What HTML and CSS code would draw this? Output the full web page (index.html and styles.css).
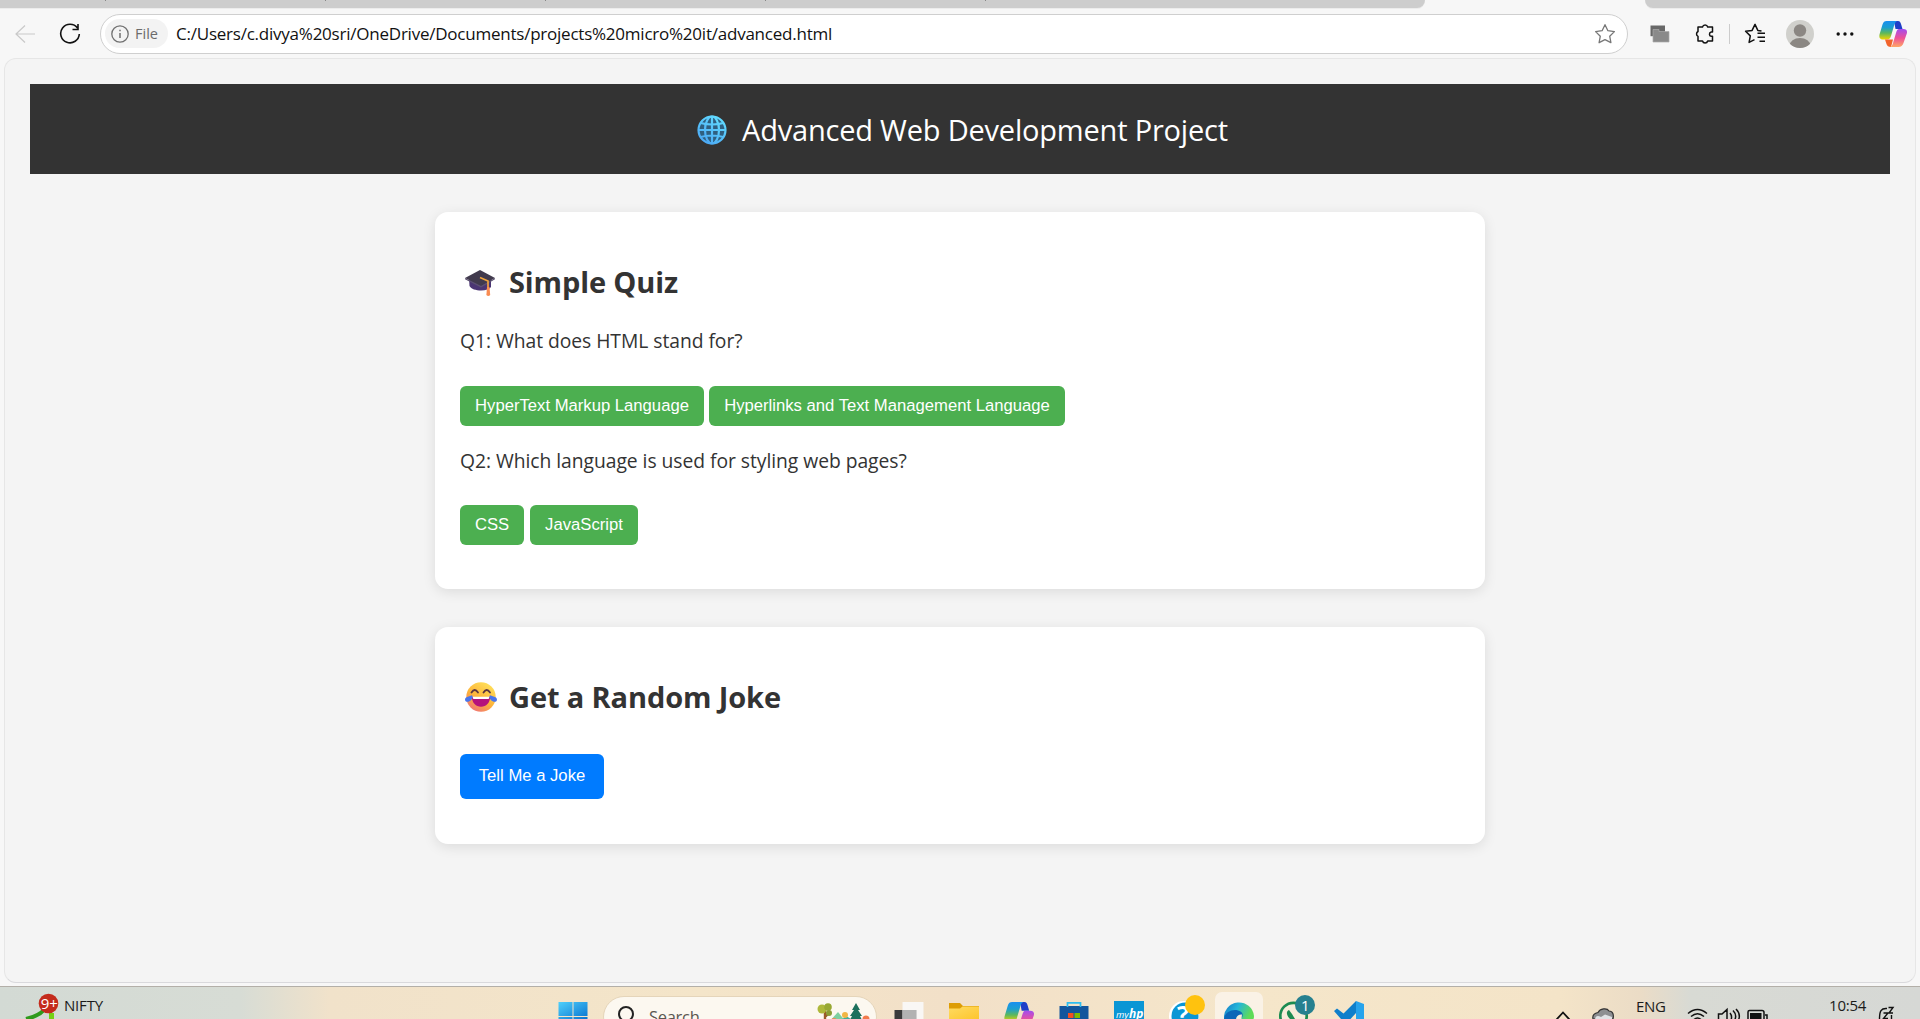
FILE: index.html
```html
<!DOCTYPE html>
<html lang="en">
<head>
<meta charset="utf-8">
<title>Advanced Web Development Project</title>
<link rel="stylesheet" href="styles.css">
</head>
<body>
<svg class="defs" width="0" height="0" aria-hidden="true">
  <defs>
    <linearGradient id="coA" x1="0" y1="0" x2="0" y2="1"><stop offset="0" stop-color="#1a8ff0"/><stop offset=".35" stop-color="#1c9fd0"/><stop offset=".65" stop-color="#5cb85c"/><stop offset="1" stop-color="#f4d400"/></linearGradient>
    <linearGradient id="coB" x1="0" y1="0" x2="0" y2="1"><stop offset="0" stop-color="#a24df0"/><stop offset=".5" stop-color="#ee5197"/><stop offset="1" stop-color="#ffa765"/></linearGradient>
    <linearGradient id="win" x1="0" y1="0" x2="1" y2="1"><stop offset="0" stop-color="#4fd0fb"/><stop offset="1" stop-color="#0873d0"/></linearGradient>
    <linearGradient id="edge" x1="0" y1="0" x2="1" y2=".3"><stop offset="0" stop-color="#1477c8"/><stop offset=".5" stop-color="#24b6d8"/><stop offset="1" stop-color="#5fdb57"/></linearGradient>
    <linearGradient id="fold" x1="0" y1="0" x2="1" y2="1"><stop offset="0" stop-color="#ffdb62"/><stop offset="1" stop-color="#fdc52d"/></linearGradient>
    <linearGradient id="face" x1=".8" y1="0" x2=".2" y2="1"><stop offset="0" stop-color="#ffe35c"/><stop offset=".55" stop-color="#fdb43a"/><stop offset="1" stop-color="#f0707a"/></linearGradient>
    <linearGradient id="globe" x1=".8" y1="0" x2=".2" y2="1"><stop offset="0" stop-color="#62dcff"/><stop offset="1" stop-color="#4ba8f5"/></linearGradient>
    <symbol id="copilot" viewBox="0 0 28 26">
      <path d="M15 0h4c2 0 2.500 1.500 3 3l1.500 5h-7z" fill="#1f3fc8"/>
      <path d="M7.500 0H18c-2 1-2.500 3-3.200 5.500L12 15c-.8 2.700-2 3.500-4 3.500H4C.5 18.500 0 16 .5 13.500L3.500 3.500C4.300 1 5.500 0 7.500 0z" fill="url(#coA)"/>
      <path d="M6 18.500h8L12 26c-2.500 0-4-1-4.500-3z" fill="#f2642c"/>
      <path d="M20 8h4.500c3 0 4 2 3.300 4.500L24.500 22c-.9 2.700-2.500 4-5 4h-9c2 0 2.800-1.600 3.400-3.500L17 12c.8-2.700 1.500-4 3-4z" fill="url(#coB)"/>
    </symbol>
  </defs>
</svg>

<div class="browser">
  <div class="tabs"><div class="tabs-left"><i></i><i></i><i></i><i></i><i></i></div><div class="tabs-right"></div></div>
  <div class="toolbar">
    <svg class="back" width="20" height="20" viewBox="0 0 20 20"><path d="M10 1.500 1 10l9 8.500M1 10h19" fill="none" stroke="#c9c9c9" stroke-width="1.200"/></svg>
    <svg class="reload" width="22" height="22" viewBox="0 0 22 22"><path d="M18.500 5A9.300 9.300 0 1 0 20.300 11M19 1v5.500h-5.500" fill="none" stroke="#111" stroke-width="1.600"/></svg>
    <div class="address">
      <div class="chip">
        <svg width="18" height="18" viewBox="0 0 18 18"><circle cx="9" cy="9" r="8.200" fill="none" stroke="#707070" stroke-width="1.300"/><path d="M9 8v5M9 4.700v1.600" stroke="#707070" stroke-width="1.500"/></svg>
        <span class="chip-text">File</span>
      </div>
      <span class="url">C:/Users/c.divya%20sri/OneDrive/Documents/projects%20micro%20it/advanced.html</span>
      <svg class="star" width="22" height="22" viewBox="0 0 22 22"><path d="m11 1.700 2.900 6 6.500.9-4.700 4.600 1.200 6.500L11 16.600l-5.900 3.100 1.200-6.500L1.600 8.600l6.500-.9z" fill="none" stroke="#777" stroke-width="1.300" stroke-linejoin="round"/></svg>
    </div>
    <svg class="squares" width="20" height="18" viewBox="0 0 20 18"><path d="M.5.500H15v10.700H.5z" fill="#686868"/><path d="M3 4.500h6v2h10v10.500H3z" fill="#8a8a8a" stroke="#aaa" stroke-width=".7"/></svg>
    <svg class="puzzle" width="22" height="22" viewBox="0 0 22 22"><path d="M4 4.500h4.500a2.700 2.700 0 0 1 5.200 0H18.500v5h-1.300a2.200 2.200 0 0 0 0 4.300h1.300v4.700h-4.800a2.700 2.700 0 0 1-5.200 0H4v-4.700a2.700 2.700 0 0 1 0-4.800z" transform="translate(0 -.5)" fill="none" stroke="#111" stroke-width="1.500" stroke-linejoin="round"/></svg>
    <span class="sep"></span>
    <svg class="favs" width="22" height="22" viewBox="0 0 22 22"><path d="M17.500 8.300 13.800 7.700 11 1.700 8.100 7.700l-6.500.9 4.700 4.600-1.200 6.500L10.500 17M13.500 10.500H21M13.500 14.500H21M15.500 18.500H21" transform="translate(0 -.3)" fill="none" stroke="#111" stroke-width="1.500" stroke-linejoin="round"/></svg>
    <svg class="avatar" width="28" height="28" viewBox="0 0 28 28"><clipPath id="av"><circle cx="14" cy="14" r="14"/></clipPath><g clip-path="url(#av)"><path d="M0 0h28v28H0z" fill="#d0d0cc"/><circle cx="14" cy="10.500" r="6.200" fill="#8b8783"/><ellipse cx="14" cy="26" rx="10.500" ry="8" fill="#8b8783"/></g></svg>
    <svg class="dots" width="18" height="6" viewBox="0 0 18 6"><g fill="#111"><circle cx="2.200" cy="3" r="1.700"/><circle cx="9" cy="3" r="1.700"/><circle cx="15.800" cy="3" r="1.700"/></g></svg>
    <svg class="copilot" width="28" height="26"><use href="#copilot"/></svg>
  </div>

  <div class="page">
    <header class="banner">
      <svg width="30" height="30" viewBox="0 0 30 30"><circle cx="15" cy="15" r="14" fill="#2f5f80"/><g fill="none" stroke="url(#globe)" stroke-width="2.200"><circle cx="15" cy="15" r="13.500"/><ellipse cx="15" cy="15" rx="7" ry="13.500"/><path d="M15.010 1v28M1 15.010h28M3.500 8q11.500 3 23 0M3.500 22q11.500-3 23 0"/></g></svg>
      <h1>Advanced Web Development Project</h1>
    </header>

    <section class="card quiz">
      <h2><svg width="30" height="28" viewBox="0 0 30 28"><path d="M4 9h22v9c-1.500 2-5 3.500-10 3.500S6 20 4.500 17z" fill="#4b3573"/><path d="M15 1 30 9 16 17 0 9z" fill="#413a4d"/><path d="M0 9 16 17 30 9v1.200L16 18.600 0 10.200z" fill="#5c5270"/><path d="M15 8.500 23 12v8" fill="none" stroke="#f0a33e" stroke-width="1.700"/><path d="M22 18h2.500l.7 8q-1.900 2-3.800 0z" fill="#f98c52"/></svg><span>Simple Quiz</span></h2>
      <p>Q1: What does HTML stand for?</p>
      <div class="answers"><button class="b1">HyperText Markup Language</button><button class="b2">Hyperlinks and Text Management Language</button></div>
      <p class="next">Q2: Which language is used for styling web pages?</p>
      <div class="answers"><button class="b3">CSS</button><button class="b4">JavaScript</button></div>
    </section>

    <section class="card joke">
      <h2><svg width="32" height="30" viewBox="0 0 32 30"><circle cx="16" cy="15" r="14.700" fill="url(#face)"/><path d="M6.500 10.500q3.200-5 6.500 0M18.500 10.500q3.200-5 6.500 0" fill="none" stroke="#5b3540" stroke-width="1.800" stroke-linecap="round"/><path d="M7 15h18c0 6-3.800 9.700-9 9.700S7 21 7 15z" fill="#b5127c"/><path d="M7.500 14.800h17l-.8 2.200H8.300z" fill="#fff"/><path d="M7 13.200c2 2-1.500 6.600-4.500 6.600S-.7 16.500 1.500 15.300zM25 13.200c-2 2 1.500 6.600 4.500 6.600s3.200-3.300 1-4.500z" fill="#4a75ec"/></svg><span>Get a Random Joke</span></h2>
      <button class="b5">Tell Me a Joke</button>
    </section>
  </div>
</div>

<footer class="taskbar">
  <div class="widget">
    <svg width="40" height="33" viewBox="0 0 40 33"><path d="M6 33 Q19 30 25 23" fill="none" stroke="#2f9a1c" stroke-width="4"/><path d="M29 27h5v6h-5z" fill="#74d014"/><circle cx="28.500" cy="17.500" r="9.800" fill="#c42b1c"/><text x="20.800" y="23" class="nine">9+</text></svg>
    <span class="nifty">NIFTY</span>
  </div>
  <div class="apps">
    <div class="slot"><svg width="30" height="18" viewBox="0 0 30 18"><path d="M.5 1h14v14H.5zM15.500 1h14v14h-14zM.5 16h14v2H.5zM15.500 16h14v2h-14z" fill="url(#win)"/></svg></div>
    <div class="search">
      <svg width="20" height="23" viewBox="0 0 20 23"><circle cx="11" cy="17" r="7" fill="none" stroke="#222" stroke-width="2"/></svg>
      <span class="search-text">Search</span>
      <svg class="scene" width="54" height="20" viewBox="0 0 54 20"><path d="M8 8v12M13 10l-5 5" stroke="#9a5a28" stroke-width="2.400"/><circle cx="5" cy="7" r="4.500" fill="#aeb83a"/><circle cx="11" cy="5" r="3.800" fill="#98a832"/><circle cx="12" cy="11" r="3" fill="#8a9c34"/><path d="m12 20 9-10 8 10z" fill="#7dcfa0"/><path d="m22 20 7-6 10 6z" fill="#3fae9b"/><circle cx="28" cy="13" r="3" fill="#f1b544"/><path d="m39 1 4 7h-2l4 6h-2l3 6H32l3-6h-2l4-6h-2z" fill="#1c705c"/><circle cx="49" cy="17" r="3.500" fill="#f27a4b"/><circle cx="17" cy="19" r="3" fill="#ee8a54"/></svg>
    </div>
    <div class="slot"><svg width="30" height="18" viewBox="0 0 30 18"><path d="M.5 9h22v9H.5z" fill="#3a3a3a"/><path d="M8.500 1h21v17h-21z" fill="#fafafa" opacity=".9"/><path d="M8.500 9h14v9h-14z" fill="#b2b2b2"/></svg></div>
    <div class="slot"><svg width="30" height="18" viewBox="0 0 30 18"><path d="M0 2h11l3 3h16v4H0z" fill="#dd9d06"/><path d="M0 7.500h11l2.500-2H30V18H0z" fill="url(#fold)"/></svg></div>
    <div class="slot"><svg width="30" height="18" viewBox="0 0 30 18"><use href="#copilot" y="1" width="30" height="28"/></svg></div>
    <div class="slot"><svg width="30" height="18" viewBox="0 0 30 18"><path d="M.5 5h29v13H.5z" fill="#13559c"/><path d="M8.500 6V1.800h13V6" fill="none" stroke="#2dbdf0" stroke-width="1.700"/><path d="M9 12h5.500v5H9z" fill="#f25022"/><path d="M15.500 12H21v5h-5.500z" fill="#7fba00"/></svg></div>
    <div class="slot"><svg width="30" height="18" viewBox="0 0 30 18"><path d="M0 0h30v18H0z" fill="#0a96d5"/><text x="2" y="16.500" class="my">my</text><text x="15" y="16.500" class="hp">hp</text></svg></div>
    <div class="slot"><svg width="36" height="25" viewBox="0 0 36 25" class="help"><circle cx="15" cy="22" r="15" fill="#fff"/><circle cx="16" cy="22" r="13.500" fill="#0a96d5"/><text x="8" y="30" class="q">?</text><circle cx="26" cy="11" r="10" fill="#ffc20e"/></svg></div>
    <div class="slot"><div class="active"><svg width="30" height="18" viewBox="0 0 30 18"><path d="M0 18A15 15 0 0 1 30 15q0 2-.5 3z" fill="url(#edge)"/><path d="M0 18C1 11 8 8 14 9.500c5 1 6 5 3 8.500z" fill="#0c67b8"/><path d="M12 18q1-5 6-4.500l-.5 4.500z" fill="#f6ecd9"/></svg></div></div>
    <div class="slot"><svg width="36" height="25" viewBox="0 0 36 25" class="help"><circle cx="14.500" cy="22" r="13.200" fill="#f6ecd9" stroke="#1c8b51" stroke-width="2.700"/><path d="M10 16c-3 1-3 5 1 9h5l-3-5z" fill="#1c8b51"/><circle cx="26" cy="11" r="10" fill="#26808f"/><text x="22" y="16.500" class="one">1</text></svg></div>
    <div class="slot"><svg width="30" height="18" viewBox="0 0 30 18"><path d="m0 10 3-2.500 6.500 5L22 0v18H7z" fill="#0f7fcb"/><path d="m16.500 18 5.500-6v6z" fill="#f5e6ca"/><path d="m22 0 8 3v15h-8z" fill="#26a3ec"/></svg></div>
  </div>
  <div class="tray">
    <svg width="60" height="33" viewBox="0 0 60 33"><path d="m1.500 33.500 6.500-7 6.500 7" fill="none" stroke="#111" stroke-width="1.800"/><path d="M38 33c-1-4 2-6 5-6.500 2-4 9-5 11-1.500 4 0 5 4 4 8z" fill="#8d8f92" stroke="#333" stroke-width="1.200"/><path d="M40 33q1-5 6-2l4-2.500 7 2.500v2z" fill="#e0e2e6"/></svg>
    <span class="eng">ENG</span>
    <svg class="status" width="82" height="33" viewBox="0 0 82 33"><g fill="none" stroke="#111" stroke-width="1.500"><path d="M1 27.500q9.500-8 19 0M4 30.500q6.500-5.500 13 0M7 33.500q3.500-3 7 0"/><path d="M31.500 34v-6h3.500l5-4.500v11M43 27q2.500 3 1 7M46 24.500q4 4 2 9M49 23q5 5 2.500 11"/><path d="M61 34V26q0-1.500 1.500-1.500H75q2 0 2 2V34M78 29h2v4"/></g><path d="M63 27h11.500v7H63z" fill="#111"/></svg>
    <span class="time">10:54</span>
    <svg width="18" height="33" viewBox="0 0 18 33"><path d="M10 22.500C4 22 2.500 25 2.500 33" fill="none" stroke="#111" stroke-width="1.400"/><path d="M6.500 27H11l-4.500 5.500H11M11.500 21.500H16L12 27h4M14.500 29v5" fill="none" stroke="#111" stroke-width="1.400"/></svg>
  </div>
</footer>
</body>
</html>
```
FILE: styles.css
```css
* { box-sizing: border-box; }
body { margin: 0; width: 1920px; height: 1019px; overflow: hidden; display: flex; flex-direction: column; background: #f7f7f7; font-family: "Open Sans", "Noto Sans", sans-serif; color: #333; }
.defs { position: absolute; }
svg { display: block; flex: none; }
span, h1, p { white-space: nowrap; }
.browser { height: 986px; display: flex; flex-direction: column; }

.tabs { height: 9px; flex: none; display: flex; justify-content: space-between; }
.tabs-left, .tabs-right { height: 8px; background: #cdcdcd; box-shadow: 0 1px #ececec; }
.tabs-left { width: 1425px; border-radius: 0 0 10px 0; display: flex; justify-content: flex-start; gap: 219px; padding-left: 105px; }
.tabs-left i { width: 1px; height: 1px; background: #888; }
.tabs-right { width: 275px; border-radius: 0 0 0 10px; }

.toolbar { height: 49px; flex: none; display: flex; align-items: center; padding-left: 15px; }
.reload { margin-left: 24px; }
.address { width: 1528px; height: 40px; margin-left: 19px; border: 1px solid #cfcfcf; border-radius: 20px; background: #fff; display: flex; align-items: center; padding-left: 4px; flex: none; }
.chip { width: 63px; height: 29px; border-radius: 15px; background: #f3f3f3; display: flex; align-items: center; gap: 6px; padding-left: 6px; flex: none; }
.chip-text { font-size: 14.500px; font-weight: 500; color: #6b6b6b; }
.url { margin-left: 8px; font-size: 17px; letter-spacing: -.230px; color: #111; }
.star { margin-left: auto; margin-right: 11px; }
.squares { margin-left: 22px; }
.puzzle { margin-left: 24px; }
.sep { width: 1px; height: 20px; background: #ccc; margin-left: 13px; }
.favs { margin-left: 14px; }
.avatar { margin-left: 20px; }
.dots { margin-left: 22px; }
.copilot { margin-left: 25px; }

.page { width: 1912px; height: 925px; margin-left: 4px; border: 1px solid #e6e6e6; border-bottom: 1px solid #d9d9dc; border-radius: 12px; background: #f4f4f4; padding: 25px 25px 0; display: flex; flex-direction: column; align-items: center; }
.banner { width: 1860px; height: 90px; flex: none; background: #333; display: flex; justify-content: flex-start; align-items: center; padding: 2px 0 0 667px; gap: 15px; }
h1 { margin: 0; font-size: 29px; font-weight: 400; letter-spacing: -.200px; color: #fff; line-height: 40px; }
.card { width: 1050px; background: #fff; border-radius: 13px; box-shadow: 0 3px 13px rgba(0,0,0,.1); padding: 0 25px; flex: none; }
.quiz { height: 377px; margin-top: 38px; padding-top: 50px; }
.joke { height: 217px; margin-top: 38px; padding-top: 50px; }
h2 { margin: 0; height: 40px; font-size: 29px; line-height: 40px; letter-spacing: -.120px; display: flex; align-items: center; padding-left: 5px; }
h2 span { margin-left: 14px; }
.quiz h2 svg { margin-top: 2px; }
.joke h2 span { margin-left: 12px; }
p { margin: 25px 0 32px; font-size: 19.300px; line-height: 27px; letter-spacing: -.040px; }
.next { margin: 21px 0 31px; }
.answers { display: flex; gap: 5px; height: 40px; }
button { height: 40px; border: 0; border-radius: 6px; background: #4caf50; color: #fff; font: 16.670px "Liberation Sans", Arial, sans-serif; padding: 0; text-align: center; white-space: nowrap; }
.b1 { width: 244px; } .b2 { width: 356px; } .b3 { width: 64px; } .b4 { width: 108px; margin-left: 1px; }
.b5 { width: 144px; height: 45px; background: #007bff; margin-top: 37px; padding-bottom: 2px; }

.taskbar { height: 33px; overflow: hidden; border-top: 1px solid #b3afa8; background: linear-gradient(90deg, #d3dad4 0, #d7dcd5 240px, #f1e2ca 330px, #f4e5c9 700px, #f2e0c8 950px, #f5e6ca 1250px, #f4e4c8 1560px, #ebdcc6 1640px, #d8dad4 1690px, #d6d8d5 1920px); display: flex; color: #1b1b1b; }
.widget { width: 545px; flex: none; display: flex; padding-left: 20px; }
.widget svg { margin-top: -1px; }
.nifty { margin: -2px 0 0 4px; font-size: 15px; letter-spacing: -.200px; line-height: 40px; }
.nine, .one { font-size: 15px; fill: #fff; }
.apps { display: flex; align-items: flex-start; flex: none; }
.slot { width: 55px; height: 32px; display: flex; justify-content: center; padding-top: 14px; flex: none; }
.help { margin: -7px -6px 0 0; }
.active { width: 48px; height: 40px; margin-top: -9px; padding: 9px 9px 0; border-radius: 7px; background: #faf2e6; flex: none; }
.search { width: 274px; height: 42px; margin: 9px 4px 0 3px; border: 1px solid #e5d5ba; border-radius: 21px; background: #fcf8f0; display: flex; align-items: flex-start; padding-left: 11px; flex: none; }
.search-text { margin: 8px 0 0 14px; font-size: 16.500px; letter-spacing: -.300px; line-height: 24px; color: #5b5751; }
.scene { margin: 5px 5px 0 auto; }
.my, .hp { font-size: 9.500px; font-style: italic; fill: #fff; }
.hp { font-size: 12px; font-weight: 700; }
.q { font-size: 25px; font-weight: 700; fill: #fff; }
.tray { display: flex; margin-left: 179px; flex: none; }
.tray svg { margin-top: -1px; }
.eng { margin: -1px 0 0 21px; width: 30px; font-size: 15px; letter-spacing: -.300px; line-height: 40px; }
.status { margin-left: 21px; }
.time { margin: -2px 10px 0 60px; width: 38px; font-size: 15px; letter-spacing: -.200px; line-height: 40px; }
```
